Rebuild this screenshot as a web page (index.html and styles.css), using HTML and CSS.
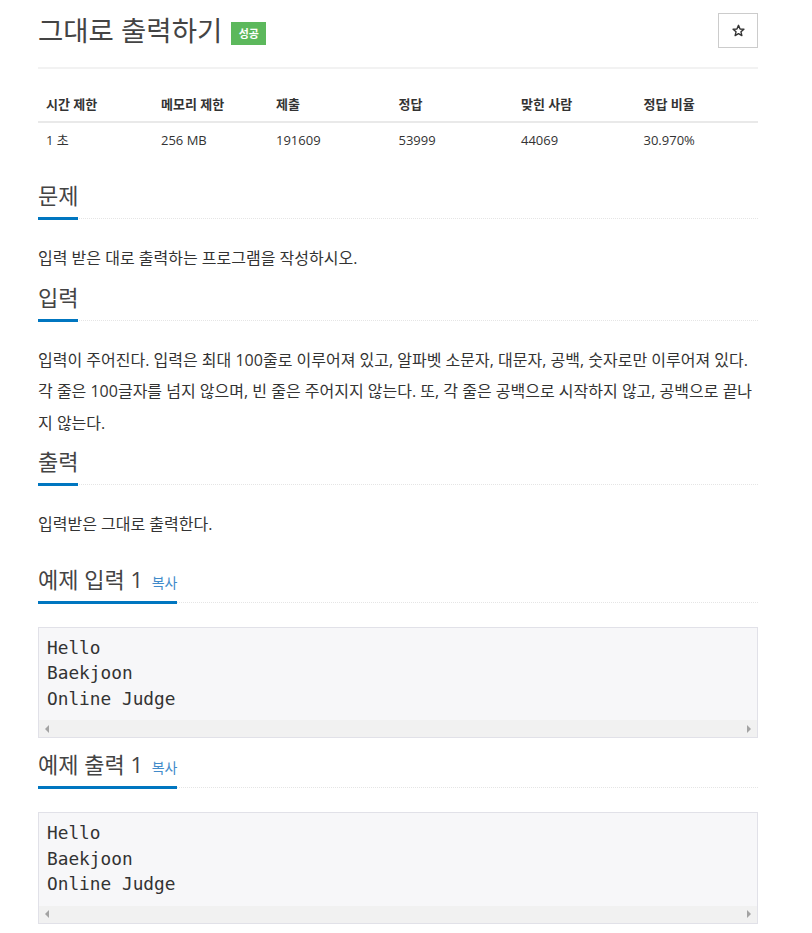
FILE: index.html
```html
<!DOCTYPE html>
<html lang="ko">

<head>
    <meta charset="UTF-8">
    <meta name="viewport" content="width=device-width, initial-scale=1.0">
    <title>그대로 출력하기</title>
    <link rel="stylesheet" href="styles.css">
</head>

<body>
    <div class="container">
        <div class="page-header">
            <h1>그대로 출력하기 <span class="label-success">성공</span></h1>
            <button class="star-btn">
                <svg width="13" height="13" viewBox="0 0 24 24">
                    <path d="M12 2.5l2.9 6.6 7.1.6-5.4 4.7 1.6 7-6.2-3.7-6.2 3.7 1.6-7L2 9.7l7.1-.6z" fill="none" stroke="#333" stroke-width="2.6" stroke-linejoin="round" />
                </svg>
            </button>
        </div>

        <table class="problem-info">
            <thead>
                <tr>
                    <th class="col-narrow">시간 제한</th>
                    <th class="col-narrow">메모리 제한</th>
                    <th class="col-wide">제출</th>
                    <th class="col-wide">정답</th>
                    <th class="col-wide">맞힌 사람</th>
                    <th>정답 비율</th>
                </tr>
            </thead>
            <tbody>
                <tr>
                    <td>1 초</td>
                    <td>256 MB</td>
                    <td>191609</td>
                    <td>53999</td>
                    <td>44069</td>
                    <td>30.970%</td>
                </tr>
            </tbody>
        </table>

        <section class="problem-section">
            <div class="headline">
                <h2>문제</h2>
            </div>
            <p>입력 받은 대로 출력하는 프로그램을 작성하시오.</p>
        </section>

        <section class="problem-section">
            <div class="headline">
                <h2>입력</h2>
            </div>
            <p>입력이 주어진다. 입력은 최대 100줄로 이루어져 있고, 알파벳 소문자, 대문자, 공백, 숫자로만 이루어져 있다. 각 줄은 100글자를 넘지 않으며, 빈 줄은 주어지지 않는다. 또, 각 줄은 공백으로 시작하지 않고, 공백으로 끝나지 않는다.</p>
        </section>

        <section class="problem-section">
            <div class="headline">
                <h2>출력</h2>
            </div>
            <p>입력받은 그대로 출력한다.</p>
        </section>

        <section class="problem-section sample">
            <div class="headline">
                <h2>예제 입력 1 <a class="copy-button">복사</a></h2>
            </div>
            <div class="sample-box">
                <pre class="sampledata">Hello
Baekjoon
Online Judge</pre>
                <div class="scrollbar"><span class="arrow-left"></span><span class="arrow-right"></span></div>
            </div>
        </section>

        <section class="problem-section sample">
            <div class="headline">
                <h2>예제 출력 1 <a class="copy-button">복사</a></h2>
            </div>
            <div class="sample-box">
                <pre class="sampledata">Hello
Baekjoon
Online Judge</pre>
                <div class="scrollbar"><span class="arrow-left"></span><span class="arrow-right"></span></div>
            </div>
        </section>
    </div>
</body>

</html>
```

FILE: styles.css
```css
body {
    font-family: "Open Sans", "Noto Sans CJK KR", sans-serif;
    color: #333;
    background-color: #fff;
    margin: 0;
    padding: 0;
}

.container {
    width: 720px;
    margin-left: 38px;
}

.page-header {
    display: flex;
    justify-content: space-between;
    align-items: center;
    padding-top: 13px;
    padding-bottom: 19px;
    border-bottom: 2px solid #f2f2f2;
}

.page-header h1 {
    margin: 0;
    font-size: 27.5px;
    font-weight: normal;
    line-height: 35px;
    color: #444;
    display: flex;
    align-items: center;
}

.label-success {
    display: inline-block;
    margin-left: 9px;
    margin-top: 6px;
    width: 35px;
    height: 23px;
    line-height: 23px;
    text-align: center;
    font-size: 11px;
    font-weight: bold;
    color: #fff;
    background-color: #5cb85c;
}

.star-btn {
    width: 40px;
    height: 35px;
    padding: 0;
    background-color: #fff;
    border: 1px solid #ccc;
    display: flex;
    align-items: center;
    justify-content: center;
    cursor: pointer;
}

.problem-info {
    width: 100%;
    border-collapse: collapse;
    margin-top: 18px;
    margin-bottom: 26px;
    font-size: 13px;
    table-layout: fixed;
}

.problem-info th,
.problem-info td {
    text-align: left;
    padding: 8px;
    line-height: 18px;
}

.problem-info th {
    border-bottom: 2px solid #e9e9e9;
}

.problem-info .col-narrow {
    width: 99px;
}

.problem-info .col-wide {
    width: 106.5px;
}

.headline {
    border-bottom: 1px dotted #e5e5e5;
    margin-bottom: 24px;
}

.headline h2 {
    display: inline-block;
    margin: 0 0 -2px 0;
    padding-bottom: 10px;
    font-size: 22px;
    font-weight: normal;
    line-height: 24px;
    color: #444;
    border-bottom: 3px solid #0076c0;
}

.problem-section {
    margin-top: 10px;
}

.problem-section:first-of-type {
    margin-top: 12px;
}

.problem-section p {
    margin: 0;
    font-size: 16px;
    line-height: 31.5px;
}

.problem-section.sample {
    margin-top: 26px;
}

.sample + .sample {
    margin-top: 14px;
}

.sample .headline h2 {
    padding-bottom: 6px;
}

.copy-button {
    font-size: 14px;
    color: #428bca;
    margin-left: 3px;
}

.sample .headline {
    margin-bottom: 24px;
}

.sample-box {
    background-color: #f7f7f9;
    border: 1px solid #e1e1e8;
}

.sampledata {
    margin: 0;
    padding: 7px 9px 9px 8px;
    font-family: "DejaVu Sans Mono", monospace;
    font-size: 17.8px;
    line-height: 25.5px;
    color: #333;
}

.scrollbar {
    height: 17px;
    background-color: #f1f1f1;
    display: flex;
    justify-content: space-between;
    align-items: center;
    padding: 0 6px;
}

.arrow-left {
    width: 0;
    height: 0;
    border-top: 4px solid transparent;
    border-bottom: 4px solid transparent;
    border-right: 4px solid #a3a3a3;
}

.arrow-right {
    width: 0;
    height: 0;
    border-top: 4px solid transparent;
    border-bottom: 4px solid transparent;
    border-left: 4px solid #a3a3a3;
}
```
